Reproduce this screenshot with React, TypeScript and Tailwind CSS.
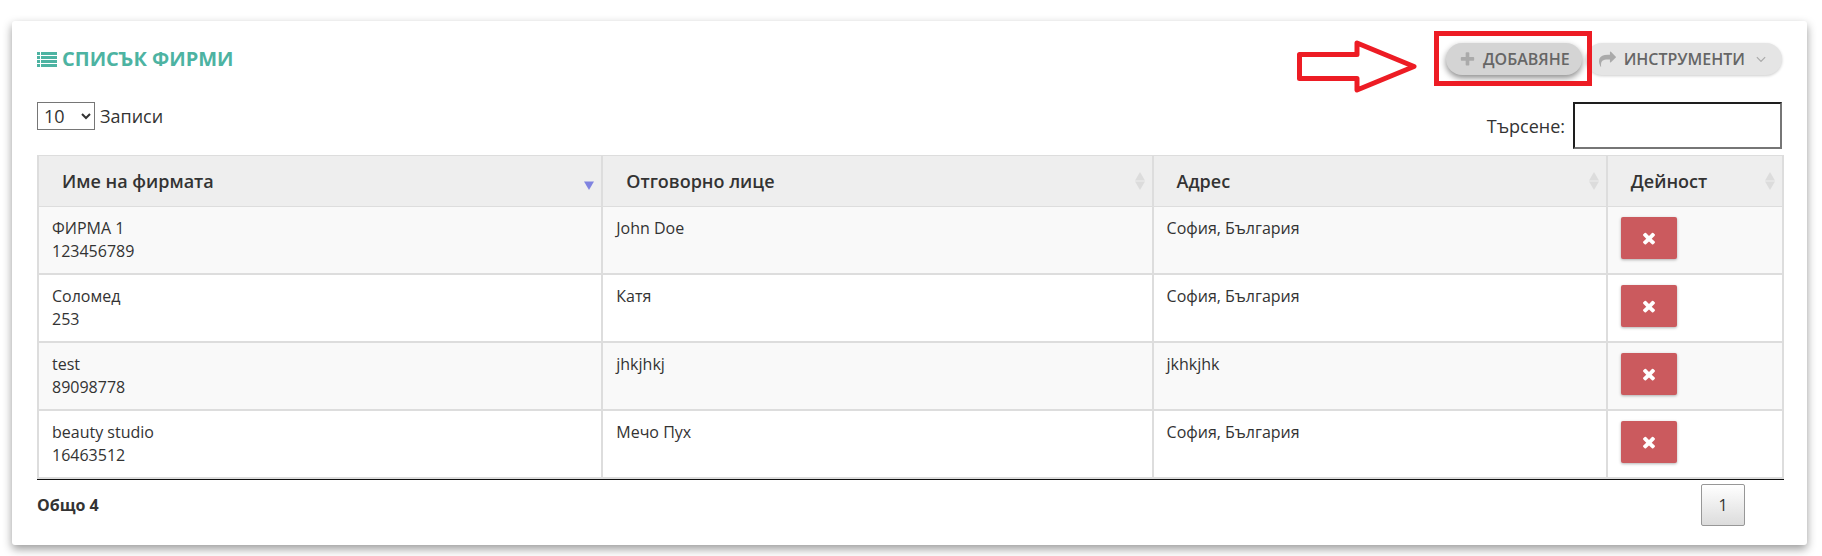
import type { ReactNode } from "react";

interface Company {
  name: string;
  code: string;
  person: string;
  address: string;
}

const COMPANIES: Company[] = [
  { name: "ФИРМА 1", code: "123456789", person: "John Doe", address: "София, България" },
  { name: "Соломед", code: "253", person: "Катя", address: "София, България" },
  { name: "test", code: "89098778", person: "jhkjhkj", address: "jkhkjhk" },
  { name: "beauty studio", code: "16463512", person: "Мечо Пух", address: "София, България" },
];

const PLUS =
  "M1600 736v192q0 40-28 68t-68 28h-416v416q0 40-28 68t-68 28h-192q-40 0-68-28t-28-68v-416h-416q-40 0-68-28t-28-68v-192q0-40 28-68t68-28h416v-416q0-40 28-68t68-28h192q40 0 68 28t28 68v416h416q40 0 68 28t28 68z";
const SHARE =
  "M1792 640q0 26-19 45l-512 512q-19 19-45 19t-45-19-19-45v-256h-224q-98 0-175.500 6t-154 21.500-133 42.500-105.500 69.500-80 101-48.500 138.500-17.500 181q0 55 5 123 0 6 2.500 23.500t2.500 26.500q0 15-8.500 25t-23.500 10q-16 0-28-17-7-9-13-22t-13.500-30-10.500-24q-127-285-127-451 0-199 53-333 162-403 875-403h224v-256q0-26 19-45t45-19 45 19l512 512q19 19 19 45z";
const TIMES =
  "M1490 1322q0 40-28 68l-136 136q-28 28-68 28t-68-28l-294-294-294 294q-28 28-68 28t-68-28l-136-136q-28-28-28-68t28-68l294-294-294-294q-28-28-28-68t28-68l136-136q28-28 68-28t68 28l294 294 294-294q28-28 68-28t68 28l136 136q28 28 28 68t-28 68l-294 294 294 294q28 28 28 68z";
const ANGLE_DOWN =
  "M1395 736q0 13-10 23l-466 466q-10 10-23 10t-23-10l-466-466q-10-10-10-23t10-23l50-50q10-10 23-10t23 10l393 393 393-393q10-10 23-10t23 10l50 50q10 10 10 23z";

function Icon({ d, className }: { d: string; className: string }) {
  return (
    <svg viewBox="0 0 1792 1792" fill="currentColor" className={className} aria-hidden="true">
      <path d={d} />
    </svg>
  );
}

function ListIcon() {
  return (
    <svg viewBox="0 0 20 15" className="h-[15px] w-5" fill="currentColor" aria-hidden="true">
      {[0, 4, 8, 12].map((y) => (
        <g key={y}>
          <rect x="0" y={y} width="3" height="3" />
          <rect x="4" y={y} width="16" height="3" />
        </g>
      ))}
    </svg>
  );
}

function SortIcon({ active }: { active?: boolean }) {
  return (
    <svg viewBox="0 0 10 18" className="h-[18px] w-[10px] shrink-0" aria-hidden="true">
      {!active && <path d="M0 8.500 5 0l5 8.500z" fill="#dcdcdc" />}
      <path d="M0 9.500h10L5 18z" fill={active ? "#7f83e0" : "#dcdcdc"} />
    </svg>
  );
}

function HeadCell({ children, active, className }: { children: ReactNode; active?: boolean; className: string }) {
  return (
    <th
      scope="col"
      aria-sort={active ? "descending" : undefined}
      className={`h-[52px] border-y border-l-2 border-[#ddd] bg-[#eee] p-0 text-left last:border-r-2 ${className}`}
    >
      <div className="flex items-center justify-between pr-[7px] pl-[23px] text-lg leading-[23px] font-semibold">
        {children}
        <SortIcon active={active} />
      </div>
    </th>
  );
}

const CELL = "border-b-2 border-l-2 border-[#ddd] px-[13px] py-[10px] last:border-r-2";

export default function App() {
  return (
    <div className="px-3 pt-[21px] pb-[11px] font-['Open_Sans','Noto_Sans',sans-serif] text-[#333]">
      <main className="mr-[3px] rounded-[3px] bg-white pt-[22px] pr-[23px] pb-[19px] pl-[25px] shadow-[0_4px_10px_rgba(0,0,0,0.4)]">
        <header className="flex h-8 items-center justify-between pr-[2px]">
          <h1 className="flex items-center gap-[5px] text-xl font-bold text-[#4db3a2]">
            <ListIcon />
            СПИСЪК ФИРМИ
          </h1>
          <div className="flex gap-1">
            <div className="relative">
              <button
                type="button"
                className="flex h-8 items-center gap-[7px] rounded-full bg-[#d4d4d4] pr-3 pl-[13px] text-base font-semibold text-[#666] shadow-[0_3px_6px_rgba(0,0,0,0.45)]"
              >
                <Icon d={PLUS} className="size-[17px] text-[#aaa]" />
                ДОБАВЯНЕ
              </button>
              {/* callout frame and arrow pointing at the add button */}
              <div className="pointer-events-none absolute -top-3 -right-[10px] -bottom-[11px] -left-3 border-5 border-[#ed1c24]" />
              <svg
                viewBox="0 0 120 54"
                className="pointer-events-none absolute top-[-3px] right-full mr-[29px] h-[54px] w-[120px]"
                fill="none"
                stroke="#ed1c24"
                strokeWidth="5"
                strokeLinejoin="round"
                aria-hidden="true"
              >
                <path d="M2.500 14.500H60V3L117 26.500 60 50V38.500H2.500z" />
              </svg>
            </div>
            <button
              type="button"
              className="flex h-8 items-center gap-2 rounded-full bg-[#e5e5e5] px-[13px] text-base font-semibold text-[#666] shadow-[0_1px_3px_rgba(0,0,0,0.2)]"
            >
              <Icon d={SHARE} className="size-[17px] text-[#aaa]" />
              ИНСТРУМЕНТИ
              <Icon d={ANGLE_DOWN} className="size-4 text-[#aaa]" />
            </button>
          </div>
        </header>

        <div className="mt-[27px] mb-[6px] flex items-start justify-between pr-[2px] text-lg">
          <label className="flex items-center gap-[5px]">
            <select className="h-7 w-[58px] rounded-none border border-[#767676] bg-white pl-[2px]" defaultValue="10">
              <option>10</option>
              <option>25</option>
              <option>50</option>
            </select>
            Записи
          </label>
          <label className="flex items-center gap-2">
            Търсене:
            <input
              type="search"
              className="h-[47px] w-[209px] border-2 border-t-[#1e1e1e] border-r-[#767676] border-b-[#767676] border-l-[#1e1e1e] px-2"
            />
          </label>
        </div>

        <table className="w-full table-fixed border-separate border-spacing-0 border-b border-[#111] text-base leading-[23px]">
          <thead>
            <tr>
              <HeadCell active className="w-[32.3%]">Име на фирмата</HeadCell>
              <HeadCell className="w-[31.5%]">Отговорно лице</HeadCell>
              <HeadCell className="w-[26%]">Адрес</HeadCell>
              <HeadCell className="w-[10.2%]">Дейност</HeadCell>
            </tr>
          </thead>
          <tbody>
            {COMPANIES.map((c) => (
              <tr key={c.code} className="align-top odd:bg-[#f9f9f9]">
                <td className={CELL}>
                  {c.name}
                  <br />
                  {c.code}
                </td>
                <td className={CELL}>{c.person}</td>
                <td className={CELL}>{c.address}</td>
                <td className={CELL}>
                  <button
                    type="button"
                    aria-label={`Изтриване ${c.name}`}
                    className="flex h-[42px] w-14 items-center justify-center rounded-xs bg-[#cb5a5e] text-white shadow-[0_1px_3px_rgba(0,0,0,0.3)]"
                  >
                    <Icon d={TIMES} className="size-[18px]" />
                  </button>
                </td>
              </tr>
            ))}
          </tbody>
        </table>

        <footer className="mt-1 flex items-center justify-between pr-[39px]">
          <p className="text-base font-bold">Общо 4</p>
          <button
            type="button"
            className="h-[42px] w-11 rounded-xs border border-[#979797] bg-linear-to-b from-white to-[#dcdcdc] text-base"
          >
            1
          </button>
        </footer>
      </main>
    </div>
  );
}
